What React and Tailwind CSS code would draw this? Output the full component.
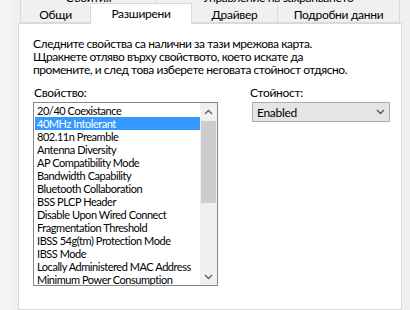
import React from 'react';

const items = [
  '20/40 Coexistance',
  '40MHz Intolerant',
  '802.11n Preamble',
  'Antenna Diversity',
  'AP Compatibility Mode',
  'Bandwidth Capability',
  'Bluetooth Collaboration',
  'BSS PLCP Header',
  'Disable Upon Wired Connect',
  'Fragmentation Threshold',
  'IBSS 54g(tm) Protection Mode',
  'IBSS Mode',
  'Locally Administered MAC Address',
  'Minimum Power Consumption',
];

function Chevron({ up, className }) {
  return (
    <svg width="9" height="6" viewBox="0 0 9 6" className={className}>
      <path
        d={up ? 'M1 5 L4.5 1.5 L8 5' : 'M1 1 L4.5 4.5 L8 1'}
        fill="none"
        stroke="currentColor"
        strokeWidth="1.4"
      />
    </svg>
  );
}

export default function App() {
  const selected = 1;

  return (
    <div className="w-[410px] h-[310px] overflow-hidden bg-[#f0f0f0] font-['Lato',sans-serif] text-[12px] tracking-[-0.3px] text-black">
      <div className="flex h-full">
        <div className="w-[12px] shrink-0 bg-[#f4f4f4]" />
        <div className="w-[390px] shrink-0 flex flex-col">
          {/* back row of tabs, mostly cut off */}
          <div className="flex h-[19px] -mt-[12px] pl-[8px] shrink-0">
            <div className="w-[137px] border border-[#d9d9d9] bg-[#f0f0f0] flex items-center justify-center leading-[13px]">
              Събития
            </div>
            <div className="w-[243px] border border-l-0 border-[#d9d9d9] bg-[#f0f0f0] flex items-center justify-center leading-[13px]">
              Управление на захранването
            </div>
          </div>

          {/* front row of tabs */}
          <div className="flex items-end h-[16px] pl-[8px] shrink-0 relative z-10">
            <div className="w-[71px] h-[17px] border border-t-0 border-[#d9d9d9] bg-[#f0f0f0] flex items-center justify-center leading-[13px]">
              Общи
            </div>
            <div className="w-[101px] h-[21px] -mb-px border border-b-0 border-l-0 border-[#d9d9d9] bg-white flex items-start justify-center pt-[3px] leading-[13px]">
              Разширени
            </div>
            <div className="w-[86px] h-[17px] border border-t-0 border-l-0 border-[#d9d9d9] bg-[#f0f0f0] flex items-center justify-center leading-[13px]">
              Драйвер
            </div>
            <div className="w-[122px] h-[17px] border border-t-0 border-l-0 border-[#d9d9d9] bg-[#f0f0f0] flex items-center justify-center leading-[13px]">
              Подробни данни
            </div>
          </div>

          {/* panel */}
          <div className="flex-1 ml-[6px] w-[384px] bg-white border border-[#d9d9d9] pl-[14px] pt-[13px]">
            <p className="leading-[13px] w-[350px] whitespace-nowrap tracking-[-0.45px]">
              Следните свойства са налични за тази мрежова карта.
              <br />
              Щракнете отляво върху свойството, което искате да
              <br />
              промените, и след това изберете неговата стойност отдясно.
            </p>

            <div className="flex mt-[10px]">
              <div className="w-[185px] shrink-0">
                <div className="leading-[13px] pl-px">Свойство:</div>
                <div className="mt-[3px] h-[184px] border border-[#828790] flex">
                  <ul className="flex-1 pt-px pl-px overflow-hidden text-[11px] tracking-[-0.45px]">
                    {items.map((it, i) => (
                      <li
                        key={it}
                        className={
                          'h-[13px] leading-[13px] pl-[2px] whitespace-nowrap ' +
                          (i === selected ? 'bg-[#3399ff] text-white' : '')
                        }
                      >
                        {it}
                      </li>
                    ))}
                  </ul>
                  <div className="w-[17px] shrink-0 bg-[#f0f0f0] flex flex-col">
                    <div className="h-[18px] flex items-center justify-center text-[#606060]">
                      <Chevron up />
                    </div>
                    <div className="h-[82px] mx-px bg-[#cdcdcd]" />
                    <div className="flex-1" />
                    <div className="h-[17px] flex items-center justify-center text-[#606060]">
                      <Chevron />
                    </div>
                  </div>
                </div>
              </div>

              <div className="ml-[32px] w-[140px]">
                <div className="leading-[13px]">Стойност:</div>
                <div className="mt-[3px] ml-[2px] w-[138px] h-[20px] border border-[#acacac] bg-[#e5e5e5] flex items-center justify-between pl-[4px] pr-[4px]">
                  <span className="leading-[13px]">Enabled</span>
                  <Chevron className="text-[#555555]" />
                </div>
              </div>
            </div>
          </div>
        </div>
        <div className="flex-1 bg-[#f0f0f0]" />
      </div>
    </div>
  );
}
